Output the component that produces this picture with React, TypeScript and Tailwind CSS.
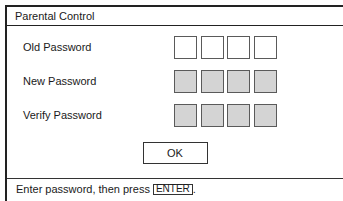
import React from 'react';

const PinBoxes = ({ filled }: { filled: boolean }) => (
    <div className="flex gap-[3.5px]">
        {[0, 1, 2, 3].map(i => (
            <div
                key={i}
                className={`w-[23px] h-[23px] border-[1.5px] border-[#5a5a5a] ${filled ? 'bg-[#d4d4d4]' : 'bg-white'}`}
            />
        ))}
    </div>
);

const rows = [
    { label: 'Old Password', filled: false },
    { label: 'New Password', filled: true },
    { label: 'Verify Password', filled: true },
];

const App = () => {
    return (
        <div className="w-[343px] h-[201px] bg-white overflow-hidden pl-[5px] pt-[5px] text-[#1a1a1a] text-[11px] leading-none" style={{ fontFamily: '"Liberation Sans", Arial, sans-serif' }}>
            <div className="border-l-2 border-t-2 border-[#222] h-[200px] flex flex-col">
                {/* Title */}
                <div className="h-[19px] flex items-center pl-[8px] border-b-[1.5px] border-[#222]">
                    Parental Control
                </div>

                {/* Password rows */}
                <div className="flex flex-col gap-[11px] pt-[10px]">
                    {rows.map(r => (
                        <div key={r.label} className="flex items-center h-[23px]">
                            <span className="w-[167px] pl-[16px]">{r.label}</span>
                            <PinBoxes filled={r.filled} />
                        </div>
                    ))}
                </div>

                <div className="flex justify-center pt-[15px] pb-[14px] border-b-[1.5px] border-[#333]">
                    <button className="w-[65px] h-[22px] border-[1.5px] border-[#333] bg-white flex items-center justify-center text-[11px]">
                        OK
                    </button>
                </div>

                {/* Footer hint */}
                <div className="h-[20px] flex items-center pl-[9px]">
                    Enter password, then press
                    <span className="ml-[3px] border border-[#333] px-[2px] h-[11px] flex items-center text-[10px] leading-none">ENTER</span>
                    <span>.</span>
                </div>
            </div>
        </div>
    );
};

export default App;
